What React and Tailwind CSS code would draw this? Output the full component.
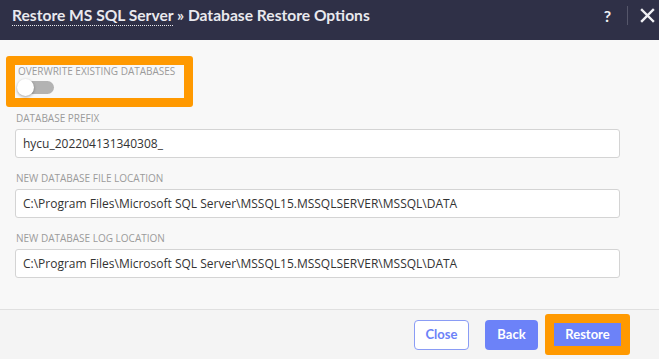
import React, { useState } from 'react';

const Field = ({ label, value }) => (
  <div className="flex flex-col">
    <label className="text-[10px] leading-[12px] text-[#9b9b9b] uppercase pl-[1px]">{label}</label>
    <input
      readOnly
      value={value}
      className="mt-[5px] h-[29px] w-full rounded-[3px] border border-[#d4d4d4] bg-white px-[7px] text-[12px] text-[#333] outline-none"
    />
  </div>
);

const App = () => {
  const [overwrite, setOverwrite] = useState(false);
  const dataPath = 'C:\\Program Files\\Microsoft SQL Server\\MSSQL15.MSSQLSERVER\\MSSQL\\DATA';

  return (
    <div className="w-[659px] h-[359px] flex flex-col overflow-hidden bg-[#f8f8f8]" style={{ fontFamily: '"Open Sans", sans-serif' }}>
      {/* header */}
      <div className="h-[40px] shrink-0 bg-[#2f3047] flex items-start justify-between pl-[12px] pr-[4px]" style={{ fontFamily: 'Lato, sans-serif' }}>
        <h1 className="mt-[5px] text-[15.6px] leading-[20px] font-bold text-[#e9e9ee]">
          <span className="border-b border-dotted border-[#e9e9ee] pb-[1px]">Restore MS SQL Server</span>
          <span> » Database Restore Options</span>
        </h1>
        <div className="flex items-center mt-[6px] h-[19px]">
          <button className="text-[16px] font-bold text-[#f0f0f4] leading-none px-[3px]">?</button>
          <div className="w-px h-[19px] bg-[#55566a] ml-[13px] mr-[12px]" />
          <button className="text-[#f0f0f4]">
            <svg width="15" height="15" viewBox="0 0 15 15">
              <path d="M2 2 L13 13 M13 2 L2 13" stroke="currentColor" strokeWidth="2.4" strokeLinecap="square" />
            </svg>
          </button>
        </div>
      </div>

      {/* body */}
      <div className="flex-1 pt-[16px] pl-[15px] pr-[39px] border-b border-[#e0e0e0]">
        <div className="-ml-[9px] w-[187px] h-[51px] border-[9px] border-[#ff9900] rounded-[3px]">
          <div className="pl-[3px]">
            <div className="text-[10px] leading-[12px] text-[#9b9b9b] uppercase">Overwrite existing databases</div>
            <button
              onClick={() => setOverwrite(!overwrite)}
              className={`relative mt-[4px] block w-[36px] h-[13px] rounded-full ${overwrite ? 'bg-[#6c82f8]' : 'bg-[#b3b3b3]'}`}
            >
              <span
                className={`absolute top-[-2px] ${overwrite ? 'left-[19px]' : 'left-[-1px]'} w-[17px] h-[17px] rounded-full bg-white shadow-[0_1px_3px_rgba(0,0,0,0.35)]`}
              />
            </button>
          </div>
        </div>

        <div className="mt-[5px]">
          <Field label="Database prefix" value="hycu_202204131340308_" />
        </div>
        <div className="mt-[14px]">
          <Field label="New database file location" value={dataPath} />
        </div>
        <div className="mt-[14px]">
          <Field label="New database log location" value={dataPath} />
        </div>
      </div>

      {/* footer */}
      <div className="h-[49px] shrink-0 bg-[#f4f4f4] flex items-center justify-end pr-[29px] text-[13px] font-bold" style={{ fontFamily: 'Lato, sans-serif' }}>
        <button className="w-[55px] h-[30px] rounded-[4px] border border-[#8a9cf5] bg-white text-[#6c82f8]">Close</button>
        <button className="ml-[16px] w-[53px] h-[30px] rounded-[4px] bg-[#6c82f8] text-white">Back</button>
        <div className="ml-[7px] w-[85px] h-[41px] border-[9px] border-[#ff9900] rounded-[3px]">
          <button className="w-full h-full bg-[#6c82f8] text-white">Restore</button>
        </div>
      </div>
    </div>
  );
};

export default App;
